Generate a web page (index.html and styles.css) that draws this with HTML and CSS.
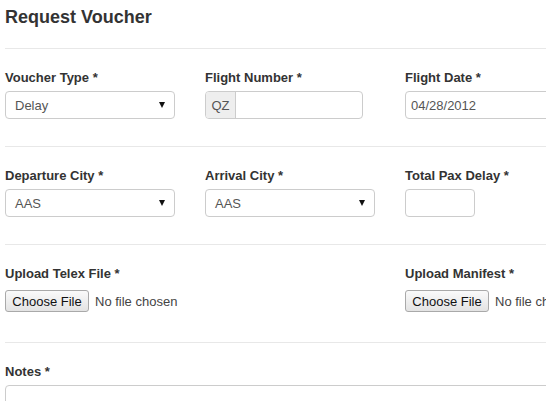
FILE: index.html
```html
<!DOCTYPE html>
<html>
<head>
<meta charset="utf-8">
<link rel="stylesheet" href="styles.css">
</head>
<body>
<div class="page">
  <h2 class="title">Request Voucher</h2>
  <div class="section">
    <div class="field">
      <label class="lbl">Voucher Type *</label>
      <div class="select w170"><span>Delay</span><i class="caret"></i></div>
    </div>
    <div class="field">
      <label class="lbl">Flight Number *</label>
      <div class="igroup"><span class="addon">QZ</span><span class="igroup-input"></span></div>
    </div>
    <div class="field">
      <label class="lbl">Flight Date *</label>
      <div class="input wdate">04/28/2012</div>
    </div>
  </div>
  <div class="section">
    <div class="field">
      <label class="lbl">Departure City *</label>
      <div class="select w170"><span>AAS</span><i class="caret"></i></div>
    </div>
    <div class="field">
      <label class="lbl">Arrival City *</label>
      <div class="select w170"><span>AAS</span><i class="caret"></i></div>
    </div>
    <div class="field">
      <label class="lbl">Total Pax Delay *</label>
      <div class="input wsmall"></div>
    </div>
  </div>
  <div class="section">
    <div class="field">
      <label class="lbl">Upload Telex File *</label>
      <div class="file"><span class="filebtn">Choose File</span><span class="filetxt">No file chosen</span></div>
    </div>
    <div class="field"></div>
    <div class="field">
      <label class="lbl">Upload Manifest *</label>
      <div class="file"><span class="filebtn">Choose File</span><span class="filetxt">No file chosen</span></div>
    </div>
  </div>
  <div class="section notes">
    <div class="field full">
      <label class="lbl">Notes *</label>
      <div class="textarea"></div>
    </div>
  </div>
</div>
</body>
</html>
```

FILE: styles.css
```css
html, body {
  margin: 0;
  padding: 0;
  overflow: hidden;
  background: #fff;
}
body {
  font-family: "Liberation Sans", Arial, sans-serif;
  color: #333;
}
.page {
  width: 640px;
  padding-left: 5px;
}
.title {
  margin: 0;
  padding-top: 7px;
  font-size: 18px;
  line-height: 20px;
  font-weight: bold;
  color: #333;
  height: 41px;
}
.section {
  border-top: 1px solid #e8e8e8;
  padding: 22px 0 27px;
  display: grid;
  grid-template-columns: 200px 200px 200px;
}
.section.notes {
  grid-template-columns: 1fr;
}
.field {
  display: flex;
  flex-direction: column;
  align-items: flex-start;
}
.lbl {
  font-size: 13px;
  line-height: 13px;
  font-weight: bold;
  color: #333;
  margin-bottom: 7px;
}
.select, .input, .igroup, .textarea {
  box-sizing: border-box;
  height: 28px;
  border: 1px solid #ccc;
  border-radius: 4px;
  background: #fff;
}
.select {
  display: flex;
  align-items: center;
  justify-content: space-between;
  padding: 0 9px 0 9px;
  font-size: 13px;
  color: #555;
}
.w170 { width: 170px; }
.caret {
  width: 0;
  height: 0;
  border-left: 3.5px solid transparent;
  border-right: 3.5px solid transparent;
  border-top: 6px solid #111;
}
.input {
  display: flex;
  align-items: center;
  padding: 0 5px;
  font-size: 13px;
  color: #555;
}
.wdate { width: 170px; }
.wsmall { width: 70px; }
.igroup {
  display: flex;
  width: 158px;
  overflow: hidden;
}
.addon {
  box-sizing: border-box;
  width: 30px;
  background: #eee;
  border-right: 1px solid #ccc;
  display: flex;
  align-items: center;
  justify-content: center;
  font-size: 13px;
  color: #555;
}
.igroup-input { flex: 1; }
.file {
  height: 28px;
  display: flex;
  align-items: center;
  font-size: 13px;
}
.filebtn {
  box-sizing: border-box;
  height: 22px;
  width: 84px;
  display: flex;
  align-items: center;
  justify-content: center;
  border: 1px solid #a9a9a9;
  border-radius: 3px;
  background: linear-gradient(#fafafa, #e3e3e3);
  color: #111;
}
.filetxt {
  margin-left: 6px;
  color: #444;
  white-space: nowrap;
}
.full { width: 100%; }
.textarea {
  width: 620px;
  height: 60px;
}
```
